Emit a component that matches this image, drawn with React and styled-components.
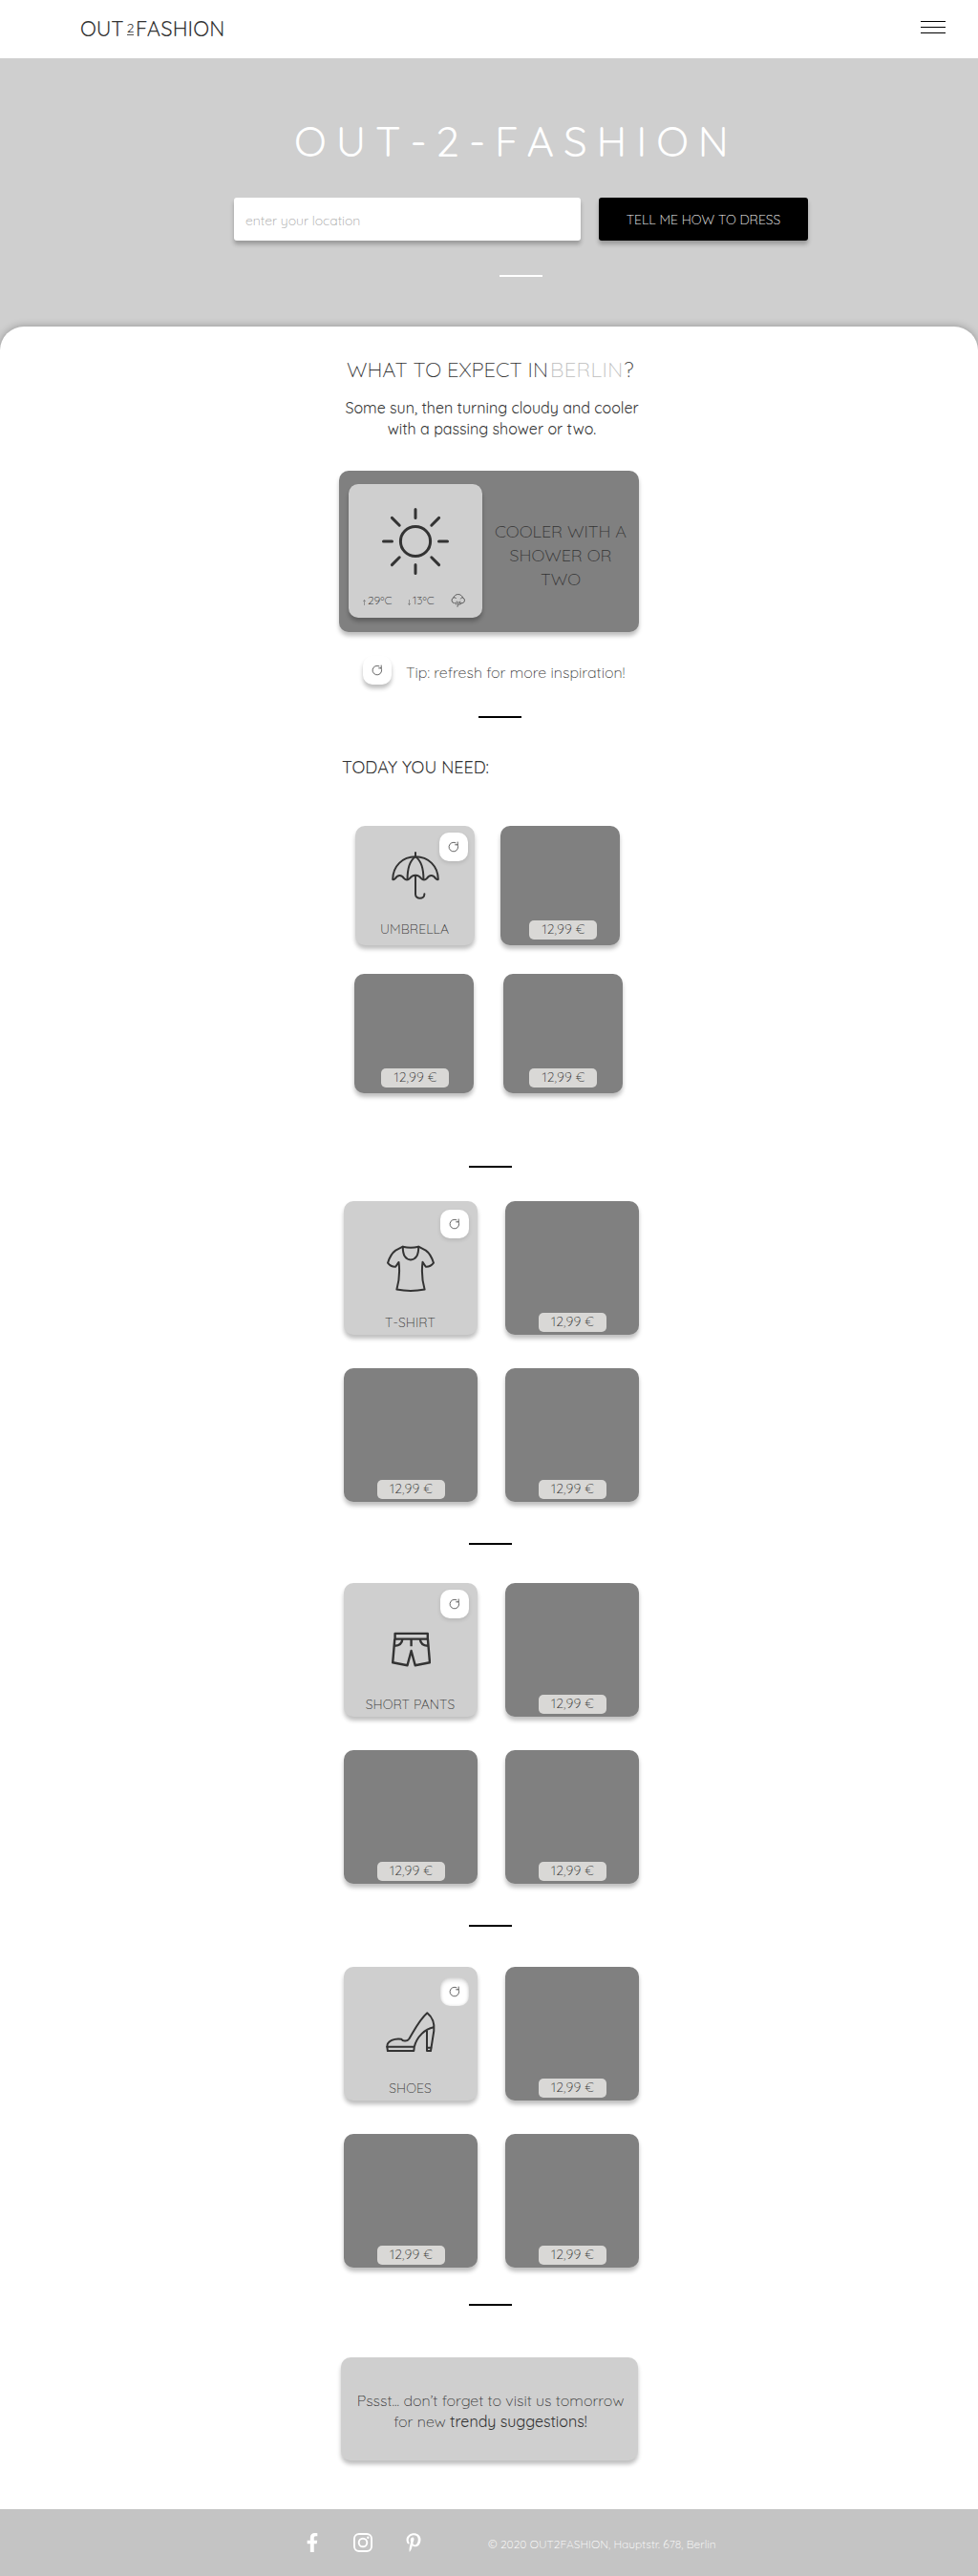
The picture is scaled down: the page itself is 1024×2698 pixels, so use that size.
import React from 'react';
import styled, { createGlobalStyle, css } from 'styled-components';
import { FaFacebookF, FaPinterestP } from 'react-icons/fa';

const GlobalStyle = createGlobalStyle`
  *, *::before, *::after { box-sizing: border-box; }
  body {
    margin: 0;
    background: #fff;
    color: #333;
    font-family: Quicksand, Lato, 'Open Sans', sans-serif;
    font-weight: 300;
  }
  button { font: inherit; color: inherit; border: 0; padding: 0; cursor: pointer; }
  svg { display: block; flex: none; }
`;

const softShadow = css`
  box-shadow: 0 4px 4px rgba(0, 0, 0, 0.25);
`;

const Page = styled.div`
  width: 1024px;
  overflow: hidden;
`;

const Header = styled.header`
  display: flex;
  justify-content: space-between;
  align-items: flex-start;
  height: 61px;
  padding: 15px 34px 0 84px;
`;

const Logo = styled.div`
  display: flex;
  align-items: flex-start;
  font-size: 22px;
  font-weight: 400;
  line-height: 30px;
  white-space: nowrap;
`;

const LogoWord = styled.span`
  width: ${(p) => p.$width}px;
  letter-spacing: ${(p) => p.$spacing}px;
`;

const LogoTwo = styled.span`
  width: 7px;
  height: 15px;
  margin: 7px 2px 0 1px;
  border-bottom: 1px solid #555;
  display: flex;
  justify-content: center;
  font-size: 14px;
  line-height: 14px;
`;

const MenuButton = styled.button`
  display: flex;
  flex-direction: column;
  gap: 5px;
  margin-top: 7px;
  background: none;
`;

const MenuBar = styled.span`
  width: 26px;
  height: 1px;
  background: #000;
`;

const Hero = styled.section`
  height: 305px;
  padding: 61px 178px 0 245px;
  background: #cfcfcf;
`;

const HeroTitle = styled.h1`
  margin: 0 0 33px;
  padding-left: 63px;
  color: #fff;
  font-size: 44px;
  font-weight: 400;
  line-height: 52px;
  letter-spacing: 9.95px;
  white-space: nowrap;
`;

const SearchForm = styled.div`
  display: flex;
  gap: 19px;
  margin-bottom: 36px;
`;

const LocationInput = styled.input`
  ${softShadow}
  width: 363px;
  height: 45px;
  padding: 3px 12px 0;
  border: 0;
  border-radius: 3px;
  outline: 0;
  background: #fff;
  font: inherit;
  font-size: 14px;
  &::placeholder { color: #a3a3a3; opacity: 1; }
`;

const SubmitButton = styled.button`
  ${softShadow}
  width: 219px;
  height: 45px;
  border-radius: 3px;
  background: #000;
  color: #fff;
  font-size: 14px;
`;

const Divider = styled.hr`
  width: 45px;
  height: 2px;
  margin: ${(p) => p.$top || 0}px 0 0 ${(p) => p.$left}px;
  border: 0;
  background: ${(p) => p.$color || '#000'};
`;

const Sheet = styled.main`
  position: relative;
  margin-top: -24px;
  padding: 31px 355px 51px;
  border-radius: 25px 25px 0 0;
  background: #fff;
  box-shadow: 0 0 8px rgba(0, 0, 0, 0.3);
`;

const Heading = styled.h2`
  display: flex;
  margin: 0 0 14px;
  padding-left: 8px;
  font-size: 22px;
  font-weight: 300;
  line-height: 29px;
  white-space: nowrap;
`;

const HeadingLead = styled.span`
  width: 213px;
`;

const City = styled.span`
  width: 77px;
  color: #bdbdbd;
  letter-spacing: 0.4px;
`;

const Forecast = styled.p`
  margin: 0;
  padding-left: 6px;
  text-align: center;
  font-size: 16px;
  font-weight: 400;
  line-height: 22px;
  white-space: nowrap;
`;

const WeatherCard = styled.section`
  ${softShadow}
  display: flex;
  align-items: flex-start;
  height: 169px;
  margin-top: 33px;
  padding: 14px 0 0 10px;
  border-radius: 10px;
  background: #808080;
`;

const WeatherTile = styled.div`
  ${softShadow}
  width: 140px;
  height: 140px;
  padding-top: 25px;
  border-radius: 10px;
  background: #cfcfcf;
  display: flex;
  flex-direction: column;
  align-items: center;
  gap: 19px;
`;

const Readings = styled.div`
  display: flex;
  width: 100%;
  padding-left: 15px;
  font-size: 12px;
  line-height: 16px;
`;

const Reading = styled.span`
  width: ${(p) => p.$width}px;
  display: flex;
`;

const Arrow = styled.span`
  width: 5px;
  display: flex;
  align-items: center;
  padding-top: 4px;
`;

const WeatherText = styled.p`
  flex: 1;
  margin: 37px 0 0;
  text-align: center;
  font-size: 18px;
  line-height: 25px;
`;

const Tip = styled.div`
  display: flex;
  gap: 15px;
  height: 30px;
  margin: 25px 0 0 25px;
  font-size: 16px;
`;

const TipText = styled.span`
  padding-top: 2px;
  line-height: 30px;
  white-space: nowrap;
`;

const RefreshBox = styled.button`
  width: 30px;
  height: 30px;
  border-radius: 10px;
  background: #fff;
  display: flex;
  align-items: center;
  justify-content: center;
  box-shadow: ${(p) => (p.$pressed
    ? 'inset 0 3px 4px rgba(0, 0, 0, 0.14), inset 0 0 3px rgba(0, 0, 0, 0.14)'
    : p.$raised
      ? '0 4px 4px rgba(0, 0, 0, 0.25)'
      : '0 2px 4px rgba(0, 0, 0, 0.12)')};
`;

const CornerRefresh = styled.div`
  position: absolute;
  top: ${(p) => p.$top}px;
  right: ${(p) => p.$right}px;
`;

const SectionTitle = styled.h3`
  margin: 39px 0 0 3px;
  font-size: 18px;
  font-weight: 400;
  line-height: 26px;
`;

const Outfit = styled.section`
  display: flex;
  flex-direction: column;
  gap: ${(p) => p.$gap}px;
  margin-top: ${(p) => p.$top}px;
`;

const Row = styled.div`
  display: flex;
  gap: ${(p) => p.$gap}px;
  margin-left: ${(p) => p.$left}px;
`;

const Card = styled.article`
  ${softShadow}
  position: relative;
  width: ${(p) => p.$size}px;
  height: ${(p) => p.$size}px;
  border-radius: 10px;
  display: flex;
  flex-direction: column;
  align-items: center;
`;

const ItemCard = styled(Card)`
  justify-content: space-between;
  padding: ${(p) => p.$iconTop}px 0 ${(p) => (p.$size === 125 ? 8 : 4)}px;
  background: #cfcfcf;
`;

const ProductCard = styled(Card)`
  justify-content: flex-end;
  padding: 0 0 ${(p) => (p.$size === 125 ? 6 : 3)}px ${(p) => p.$nudge || 0}px;
  background: #808080;
`;

const ItemLabel = styled.span`
  padding-right: 1px;
  font-size: 14px;
  line-height: 18px;
  letter-spacing: 0.07px;
`;

const Price = styled.span`
  width: 71px;
  height: 20px;
  padding-left: 1px;
  border-radius: 5px;
  background: #d9d8d6;
  text-align: center;
  font-size: 14px;
  line-height: 18px;
  letter-spacing: 0.15px;
`;

const Reminder = styled.aside`
  ${softShadow}
  width: 311px;
  height: 108px;
  margin: 54px 0 0 2px;
  padding: 34px 0 0 2px;
  border-radius: 10px;
  background: #cfcfcf;
  text-align: center;
  font-size: 16px;
  line-height: 22px;
  white-space: nowrap;
`;

const Strong = styled.span`
  font-weight: 400;
`;

const Footer = styled.footer`
  position: relative;
  display: flex;
  align-items: flex-start;
  height: 70px;
  padding: 25px 0 0 317px;
  background: #c4c4c4;
  color: #fff;
`;

const Social = styled.nav`
  display: flex;
  gap: 33px;
  font-size: 20px;
`;

const Copyright = styled.p`
  margin: 3px 0 0 68px;
  font-size: 12px;
  line-height: 18px;
  letter-spacing: 0.05px;
  white-space: nowrap;
`;

const RefreshIcon = () => (
  <svg width="12" height="12" viewBox="0 0 12 12" fill="none" stroke="#333" strokeWidth="0.75" strokeLinecap="round" strokeLinejoin="round">
    <path d="M10.2 1v2.8H7.6" />
    <path d="M10.1 3.7A4.8 4.8 0 1 1 8 1.7" />
  </svg>
);

const SunIcon = () => (
  <svg width="70" height="70" viewBox="0 0 70 70" fill="none" stroke="#333" strokeWidth="3" strokeLinecap="round">
    <circle cx="35" cy="35" r="15.6" />
    <path d="M35 1.5v9M35 59.5v9M1.5 35h9M59.5 35h9M10.4 10.4l7.8 7.8M51.8 51.8l7.8 7.8M59.6 10.4l-7.8 7.8M18.2 51.8l-7.8 7.8" />
  </svg>
);

const RainIcon = () => (
  <svg width="16" height="16" viewBox="0 0 16 16" fill="none" stroke="#444" strokeWidth="0.8" strokeLinecap="round" strokeLinejoin="round">
    <path d="M4.4 10.7H3.6A3 3 0 0 1 3 4.9 C3.6 2.8 5.4 1.5 7.7 1.5 S11.9 2.9 12.4 4.9 A3 3 0 0 1 12.1 10.7 H11.3" />
    <path d="M3 4.9c1.1-.3 2 0 2.6.8M12.4 4.9c-1.1 0-1.7.4-2.1 1.1M6.2 9l-.7 3M8 9.4l-1 5M9.8 9l-.8 3.6M10.9 10.6l-.3 1" />
  </svg>
);

const TempArrow = ({ down }) => (
  <svg width="3" height="6" viewBox="0 0 3 6" fill="none" stroke="#555" strokeWidth="0.5" strokeLinecap="round">
    <path d={down ? 'M1.5 .4v5M.4 4.3l1.1 1.1 1.1-1.1' : 'M1.5 5.6v-5M.4 1.7 1.5.6l1.1 1.1'} />
  </svg>
);

const UmbrellaIcon = () => (
  <svg width="50" height="50" viewBox="0 0 50 50" fill="none" stroke="#333" strokeWidth="2" strokeLinecap="round" strokeLinejoin="round">
    <path d="M25 1v4.2" />
    <path d="M1.2 29C1.4 15 11.5 5.2 25 5.2S48.6 15 48.8 29q-1.4.6-2.6-.8c-2.6-4.3-6.8-4-9.4 0-1.5 1.8-4.2 1.8-5.6 0-2.6-3.7-4.2-3.5-6.2-3.5s-3.6-.2-6.2 3.5c-1.4 1.8-4.1 1.8-5.6 0-2.6-4-6.8-4.3-9.4 0Q2.6 29.6 1.2 29z" />
    <path d="M25 5.2C19.5 9 16.5 18 16.6 29M25 5.2C30.5 9 33.5 18 33.4 29" />
    <path d="M25 25v19.5c0 5.8 9.4 5.8 9.4-.3" />
  </svg>
);

const ShirtIcon = () => (
  <svg width="50" height="50" viewBox="0 0 50 50" fill="none" stroke="#333" strokeWidth="2" strokeLinejoin="round" strokeLinecap="round">
    <path d="M16.8 1.7Q25 3.8 33.2 1.7L40.8 5.6C44.2 8 47.2 13 49 18.7 46.8 21.6 44.3 23 40.8 22.8L37.5 17.9C36.2 28 37.2 38 39.6 46.6Q25 49.4 10.4 46.6C12.8 38 13.8 28 12.5 17.9L9.2 22.8C5.7 23 3.2 21.6 1 18.7 2.8 13 5.8 8 9.2 5.6z" />
    <path d="M16.8 1.7C16.6 11 20 15.4 25 15.4S33.4 11 33.2 1.7" />
  </svg>
);

const ShortsIcon = () => (
  <svg width="41" height="37" viewBox="0 0 41 37" fill="none" stroke="#333" strokeWidth="2.4" strokeLinejoin="round">
    <path d="M3.6 1.9h34.2v5.7H3.6z" />
    <path d="M3.3 7.6L1.2 32.3l15.3 3L20.6 20l4.1 15.3 15.3-3L37.9 7.6" />
    <path d="M20.6 7.6v7.6M11.3 8c-.3 4-3.5 6.5-8 6.7M29.9 8c.3 4 3.5 6.5 8 6.7" />
  </svg>
);

const HeelIcon = () => (
  <svg width="54" height="44" viewBox="0 0 54 44" fill="none" stroke="#333" strokeWidth="2" strokeLinejoin="round" strokeLinecap="round">
    <path d="M2.3 37.7C2 31.5 10.5 28.5 17.3 29.7 18.5 31.7 22.8 32.8 25.3 29.5 31 20 36 9.5 44.3 2.2 49 6 52.3 12 51.3 21L48 42H44V21.3" />
    <path d="M51 17.3C42 19 33.5 27 30.8 37.7H2.3L2.9 42H30.3L30.8 37.7M44 38.8h4.3" />
  </svg>
);

const InstagramIcon = () => (
  <svg width="20" height="20" viewBox="0 0 20 20" fill="none" stroke="#fff" strokeWidth="1.9">
    <rect x="0.95" y="0.95" width="18.1" height="18.1" rx="5" />
    <circle cx="10" cy="10" r="4.3" />
    <circle cx="15.3" cy="4.7" r="1.2" fill="#fff" stroke="none" />
  </svg>
);

const Product = ({ size, nudge }) => (
  <ProductCard $size={size} $nudge={nudge}>
    <Price>12,99 €</Price>
  </ProductCard>
);

const evenRows = [{ left: 5, gap: 29 }, { left: 5, gap: 29 }];

const looks = [
  {
    label: 'UMBRELLA', Icon: UmbrellaIcon, iconTop: 27, size: 125, top: 48, gap: 30,
    rows: [{ left: 17, gap: 27 }, { left: 16, gap: 31 }], nudge: 6, refresh: [7, 7], dividerTop: 76,
  },
  {
    label: 'T-SHIRT', Icon: ShirtIcon, iconTop: 46, size: 140, top: 35, gap: 35,
    rows: evenRows, refresh: [9, 9], dividerTop: 43,
  },
  {
    label: 'SHORT PANTS', Icon: ShortsIcon, iconTop: 51, size: 140, top: 40, gap: 35,
    rows: evenRows, refresh: [7, 9], dividerTop: 43,
  },
  {
    label: 'SHOES', Icon: HeelIcon, iconTop: 46, size: 140, top: 42, gap: 35,
    rows: evenRows, refresh: [11, 9], pressed: true, dividerTop: 38,
  },
];

const Look = ({ look }) => {
  const { Icon, size, rows, refresh } = look;
  return (
    <>
      <Outfit $top={look.top} $gap={look.gap}>
        <Row $left={rows[0].left} $gap={rows[0].gap}>
          <ItemCard $size={size} $iconTop={look.iconTop}>
            <Icon />
            <ItemLabel>{look.label}</ItemLabel>
            <CornerRefresh $top={refresh[0]} $right={refresh[1]}>
              <RefreshBox $pressed={look.pressed} aria-label="Refresh">
                <RefreshIcon />
              </RefreshBox>
            </CornerRefresh>
          </ItemCard>
          <Product size={size} nudge={look.nudge} />
        </Row>
        <Row $left={rows[1].left} $gap={rows[1].gap}>
          <Product size={size} nudge={size === 125 ? 2 : 0} />
          <Product size={size} />
        </Row>
      </Outfit>
      <Divider $top={look.dividerTop} $left={136} />
    </>
  );
};

export default function App() {
  return (
    <Page>
      <GlobalStyle />
      <Header>
        <Logo>
          <LogoWord $width={48} $spacing={-0.1}>OUT</LogoWord>
          <LogoTwo>2</LogoTwo>
          <LogoWord $spacing={0.1}>FASHION</LogoWord>
        </Logo>
        <MenuButton aria-label="Menu">
          <MenuBar />
          <MenuBar />
          <MenuBar />
        </MenuButton>
      </Header>

      <Hero>
        <HeroTitle>OUT-2-FASHION</HeroTitle>
        <SearchForm>
          <LocationInput placeholder="enter your location" />
          <SubmitButton>TELL ME HOW TO DRESS</SubmitButton>
        </SearchForm>
        <Divider $left={278} $color="#fff" />
      </Hero>

      <Sheet>
        <Heading>
          <HeadingLead>WHAT TO EXPECT IN</HeadingLead>
          <City>BERLIN</City>
          <span>?</span>
        </Heading>
        <Forecast>
          Some sun, then turning cloudy and cooler
          <br />
          with a passing shower or two.
        </Forecast>

        <WeatherCard>
          <WeatherTile>
            <SunIcon />
            <Readings>
              <Reading $width={47}><Arrow><TempArrow /></Arrow>29ºC</Reading>
              <Reading $width={45}><Arrow><TempArrow down /></Arrow>13ºC</Reading>
              <RainIcon />
            </Readings>
          </WeatherTile>
          <WeatherText>
            COOLER WITH A
            <br />
            SHOWER OR
            <br />
            TWO
          </WeatherText>
        </WeatherCard>

        <Tip>
          <RefreshBox $raised aria-label="Refresh"><RefreshIcon /></RefreshBox>
          <TipText>Tip: refresh for more inspiration!</TipText>
        </Tip>
        <Divider $top={33} $left={146} />

        <SectionTitle>TODAY YOU NEED:</SectionTitle>
        {looks.map((look) => (
          <Look key={look.label} look={look} />
        ))}

        <Reminder>
          Pssst... don’t forget to visit us tomorrow
          <br />
          for new <Strong>trendy suggestions!</Strong>
        </Reminder>
      </Sheet>

      <Footer>
        <Social>
          <FaFacebookF />
          <InstagramIcon />
          <FaPinterestP />
        </Social>
        <Copyright>© 2020 OUT2FASHION, Hauptstr. 678, Berlin</Copyright>
      </Footer>
    </Page>
  );
}
